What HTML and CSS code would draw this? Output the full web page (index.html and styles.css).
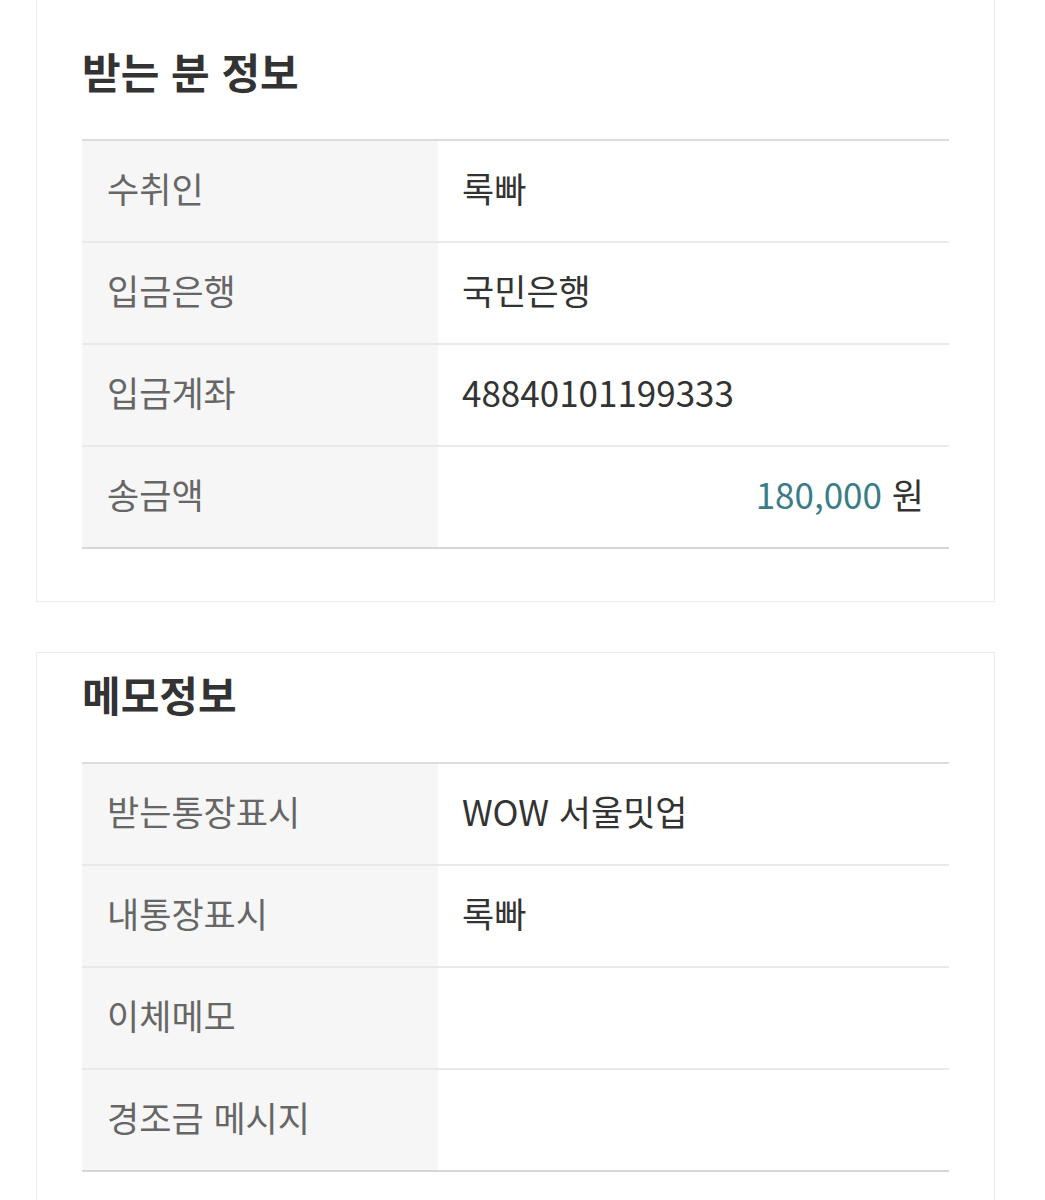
FILE: index.html
```html
<!DOCTYPE html>
<html lang="ko">
<head>
<meta charset="utf-8">
<link rel="stylesheet" href="styles.css">
</head>
<body>
<div class="page">
  <section class="card card-first">
    <h2 class="card-title">받는 분 정보</h2>
    <table class="info">
      <tr><th>수취인</th><td>록빠</td></tr>
      <tr><th>입금은행</th><td>국민은행</td></tr>
      <tr><th>입금계좌</th><td>48840101199333</td></tr>
      <tr><th>송금액</th><td class="amount"><span class="num">180,000</span> 원</td></tr>
    </table>
  </section>
  <section class="card">
    <h2 class="card-title">메모정보</h2>
    <table class="info">
      <tr><th>받는통장표시</th><td>WOW 서울밋업</td></tr>
      <tr><th>내통장표시</th><td>록빠</td></tr>
      <tr><th>이체메모</th><td></td></tr>
      <tr><th>경조금 메시지</th><td></td></tr>
    </table>
  </section>
</div>
</body>
</html>
```
FILE: styles.css
```css
html, body {
  margin: 0;
  padding: 0;
  background: #ffffff;
}
body {
  font-family: "Noto Sans CJK KR", "Noto Sans", sans-serif;
  color: #333;
}
.page {
  display: flex;
  flex-direction: column;
  gap: 50px;
  padding-left: 36px;
  width: 959px;
}
.card {
  border: 1px solid #ececec;
  padding: 12px 45px 52px 45px;
  background: #fff;
}
.card-first {
  border-top: 0;
  padding-top: 42px;
}
.card-title {
  margin: 0 0 39px 0;
  font-size: 42px;
  line-height: 58px;
  font-weight: 700;
  color: #333;
}
.info {
  width: 100%;
  border-collapse: collapse;
  border-top: 2px solid #dcdcdc;
  border-bottom: 2px solid #d6d6d6;
}
.info tr + tr th,
.info tr + tr td {
  border-top: 2px solid #e9e9e9;
}
.info th,
.info td {
  height: 102px;
  padding-top: 0;
  padding-bottom: 6px;
  box-sizing: border-box;
  font-size: 35px;
  line-height: 50px;
}
.info th {
  width: 356px;
  padding-left: 25px;
  padding-right: 0;
  background: #f6f6f6;
  text-align: left;
  font-weight: 400;
  color: #666;
}
.info td {
  padding-left: 24px;
  padding-right: 25px;
  color: #333;
}
.info td.amount {
  text-align: right;
}
.num {
  color: #3a7d88;
}
```
